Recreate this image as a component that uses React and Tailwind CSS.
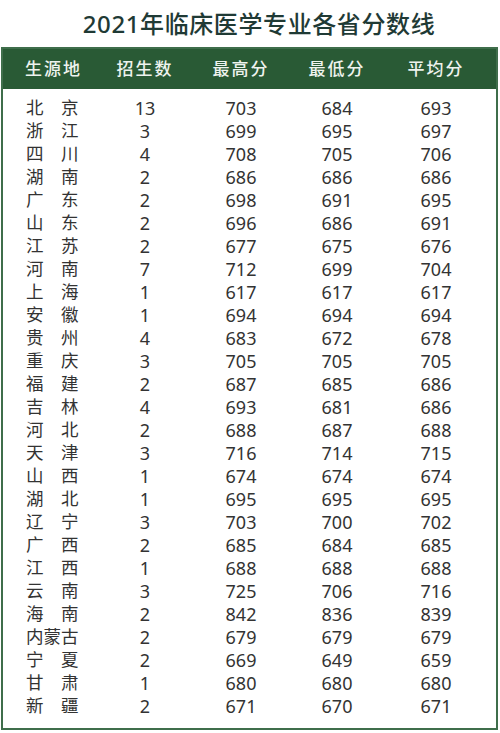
const rows = [
  ['北　京', 13, 703, 684, 693],
  ['浙　江', 3, 699, 695, 697],
  ['四　川', 4, 708, 705, 706],
  ['湖　南', 2, 686, 686, 686],
  ['广　东', 2, 698, 691, 695],
  ['山　东', 2, 696, 686, 691],
  ['江　苏', 2, 677, 675, 676],
  ['河　南', 7, 712, 699, 704],
  ['上　海', 1, 617, 617, 617],
  ['安　徽', 1, 694, 694, 694],
  ['贵　州', 4, 683, 672, 678],
  ['重　庆', 3, 705, 705, 705],
  ['福　建', 2, 687, 685, 686],
  ['吉　林', 4, 693, 681, 686],
  ['河　北', 2, 688, 687, 688],
  ['天　津', 3, 716, 714, 715],
  ['山　西', 1, 674, 674, 674],
  ['湖　北', 1, 695, 695, 695],
  ['辽　宁', 3, 703, 700, 702],
  ['广　西', 2, 685, 684, 685],
  ['江　西', 1, 688, 688, 688],
  ['云　南', 3, 725, 706, 716],
  ['海　南', 2, 842, 836, 839],
  ['内蒙古', 2, 679, 679, 679],
  ['宁　夏', 2, 669, 649, 659],
  ['甘　肃', 1, 680, 680, 680],
  ['新　疆', 2, 671, 670, 671],
];

const headers = ['招生数', '最高分', '最低分', '平均分'];
const cols = 'grid grid-cols-[94px_96px_96px_96px_102px]';

export default function App() {
  return (
    <div
      className="w-[500px] h-[733px] bg-white overflow-hidden"
      style={{ fontFamily: '"Noto Sans", "Noto Sans CJK SC", sans-serif' }}
    >
      <h1 className="h-[47px] flex items-center justify-center pl-[18px] text-[24px] tracking-[0.6px] font-medium text-[#1f3a35]">
        2021年临床医学专业各省分数线
      </h1>

      <div className="ml-[1px] w-[497px] border-2 border-[#3f6e4b]">
        {/* header band */}
        <div className={`${cols} h-[40px] items-center bg-[#295a35] text-[#eef3ee] text-[17px] tracking-[2px] font-medium`}>
          <div className="pl-[22px]">生源地</div>
          {headers.map((h) => (
            <div key={h} className="text-center">{h}</div>
          ))}
        </div>

        <div className="pt-[7px] pb-[11px] text-[#333333]">
          {rows.map(([name, n, hi, lo, avg]) => (
            <div key={name} className={`${cols} h-[23px] items-center`}>
              <div className="pl-[23px] text-[17.5px] leading-none">{name}</div>
              <div className="text-center text-[18px] leading-none">{n}</div>
              <div className="text-center text-[18px] leading-none">{hi}</div>
              <div className="text-center text-[18px] leading-none">{lo}</div>
              <div className="text-center text-[18px] leading-none">{avg}</div>
            </div>
          ))}
        </div>
      </div>
    </div>
  );
}
